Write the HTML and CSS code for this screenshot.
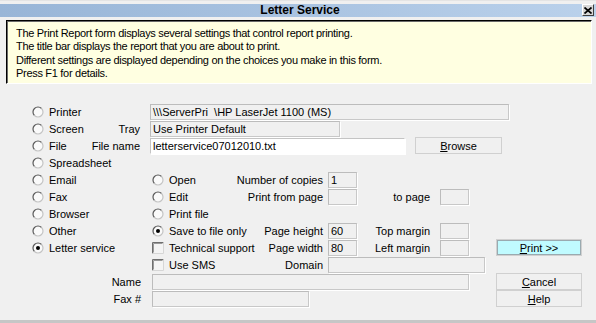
FILE: index.html
```html
<!DOCTYPE html>
<html lang="en">
<head>
    <meta charset="UTF-8">
    <title>Letter Service</title>
    <link rel="stylesheet" href="styles.css">
</head>
<body>
    <svg class="defs" width="0" height="0">
        <symbol id="rb" viewBox="0 0 12 12">
            <circle cx="6" cy="6" r="5" fill="#fafafa"/>
            <path d="M2.46 9.54 A5 5 0 0 1 9.54 2.46" fill="none" stroke="#5a5a5a" stroke-width="1.2"/>
            <path d="M9.54 2.46 A5 5 0 0 1 2.46 9.54" fill="none" stroke="#c4c4c4" stroke-width="1.2"/>
        </symbol>
        <symbol id="rbon" viewBox="0 0 12 12">
            <circle cx="6" cy="6" r="5" fill="#fafafa"/>
            <path d="M2.46 9.54 A5 5 0 0 1 9.54 2.46" fill="none" stroke="#5a5a5a" stroke-width="1.2"/>
            <path d="M9.54 2.46 A5 5 0 0 1 2.46 9.54" fill="none" stroke="#c4c4c4" stroke-width="1.2"/>
            <circle cx="6" cy="6" r="2" fill="#000"/>
        </symbol>
        <symbol id="cb" viewBox="0 0 12 12">
            <rect x="0" y="0" width="12" height="12" fill="#f4f4f4"/>
            <path d="M0.5 11.5 V0.5 H11.5" fill="none" stroke="#6e6e6e"/>
            <path d="M1.5 10.5 V1.5 H10.5" fill="none" stroke="#9a9a9a"/>
            <path d="M0.5 11.5 H11.5 V0.5" fill="none" stroke="#d6d6d6"/>
        </symbol>
    </svg>

    <div class="dialog">
        <div class="titlebar">
            <span class="title">Letter Service</span>
            <span class="close">
                <svg width="8" height="7" viewBox="0 0 8 7"><path d="M0.5 0.5 L7.5 6.5 M7.5 0.5 L0.5 6.5" stroke="#000" stroke-width="1.7"/></svg>
            </span>
        </div>

        <div class="info">
            The Print Report form displays several settings that control report printing.<br>
            The title bar displays the report that you are about to print.<br>
            Different settings are displayed depending on the choices you make in this form.<br>
            Press F1 for details.
        </div>

        <div class="form">
            <!-- destination row 1 -->
            <div class="c1 pair"><span class="opt"><svg class="ico"><use href="#rb"/></svg>Printer</span></div>
            <div class="c2-end"><div class="field w-printer">\\\ServerPri&nbsp;&nbsp;\HP LaserJet 1100 (MS)</div></div>

            <div class="c1 pair"><span class="opt"><svg class="ico"><use href="#rb"/></svg>Screen</span><span>Tray</span></div>
            <div class="c2-end"><div class="field w-tray">Use Printer Default</div></div>

            <div class="c1 pair"><span class="opt"><svg class="ico"><use href="#rb"/></svg>File</span><span>File name</span></div>
            <div class="c2-end file-row">
                <div class="field white w-file">letterservice07012010.txt</div>
                <div class="btn w-browse"><u>B</u>rowse</div>
            </div>

            <div class="c1 pair"><span class="opt"><svg class="ico"><use href="#rb"/></svg>Spreadsheet</span></div>

            <div class="c1 pair"><span class="opt"><svg class="ico"><use href="#rb"/></svg>Email</span></div>
            <div class="c2 pair pr5"><span class="opt sub"><svg class="ico"><use href="#rb"/></svg>Open</span><span>Number of copies</span></div>
            <div class="c3"><div class="field w-small">1</div></div>

            <div class="c1 pair"><span class="opt"><svg class="ico"><use href="#rb"/></svg>Fax</span></div>
            <div class="c2 pair pr5"><span class="opt sub"><svg class="ico"><use href="#rb"/></svg>Edit</span><span>Print from page</span></div>
            <div class="c3"><div class="field w-small"></div></div>
            <div class="c4 lbl">to page</div>
            <div class="c5"><div class="field w-small"></div></div>

            <div class="c1 pair"><span class="opt"><svg class="ico"><use href="#rb"/></svg>Browser</span></div>
            <div class="c2 pair pr5"><span class="opt sub"><svg class="ico"><use href="#rb"/></svg>Print file</span></div>

            <div class="c1 pair"><span class="opt"><svg class="ico"><use href="#rb"/></svg>Other</span></div>
            <div class="c2 pair pr5"><span class="opt sub"><svg class="ico"><use href="#rbon"/></svg>Save to file only</span><span>Page height</span></div>
            <div class="c3"><div class="field w-small">60</div></div>
            <div class="c4 lbl">Top margin</div>
            <div class="c5"><div class="field w-small"></div></div>

            <div class="c1 pair"><span class="opt"><svg class="ico"><use href="#rbon"/></svg>Letter service</span></div>
            <div class="c2 pair pr5"><span class="opt sub"><svg class="ico"><use href="#cb"/></svg>Technical support</span><span>Page width</span></div>
            <div class="c3"><div class="field w-small">80</div></div>
            <div class="c4 lbl">Left margin</div>
            <div class="c5"><div class="field w-small"></div></div>
            <div class="c7"><div class="btn w-btn print"><u>P</u>rint &gt;&gt;</div></div>

            <div class="c2 pair pr5"><span class="opt sub"><svg class="ico"><use href="#cb"/></svg>Use SMS</span><span>Domain</span></div>
            <div class="c3-end"><div class="field w-domain"></div></div>

            <div class="c1 lbl name-lbl">Name</div>
            <div class="c2-5"><div class="field w-name"></div></div>
            <div class="c7"><div class="btn w-btn"><u>C</u>ancel</div></div>

            <div class="c1 lbl name-lbl">Fax #</div>
            <div class="c2-5"><div class="field w-fax"></div></div>
            <div class="c7"><div class="btn w-btn"><u>H</u>elp</div></div>
        </div>
    </div>
</body>
</html>
```

FILE: styles.css
```css
body {
    margin: 0;
    font-family: "Liberation Sans", Arial, sans-serif;
    font-size: 11px;
    color: #000;
    background-color: #f0f0f0;
}
.defs {
    position: absolute;
    width: 0;
    height: 0;
}
.dialog {
    width: 596px;
    height: 323px;
    box-sizing: border-box;
    padding-top: 4px;
    background-color: #f0f0f0;
    border-top: 1px solid #e4e4e4;
    border-bottom: 3px solid #c6c6c6;
    overflow: hidden;
}
.titlebar {
    height: 13px;
    margin-top: -1px;
    display: flex;
    align-items: center;
    justify-content: center;
    position: relative;
    background: linear-gradient(to right, #98b5d7, #bad1eb);
}
.title {
    font-weight: bold;
    font-size: 12px;
    line-height: 13px;
    padding-left: 4px;
}
.close {
    position: absolute;
    right: 2px;
    top: 0;
    width: 10px;
    height: 10px;
    display: flex;
    align-items: center;
    justify-content: center;
    background-color: #d8d8d8;
    border: 1px solid;
    border-color: #fff #404040 #404040 #fff;
}
.info {
    margin: 3px 4px 0 6px;
    height: 64px;
    box-sizing: border-box;
    padding: 6px 0 0 9px;
    line-height: 13.3px;
    letter-spacing: -0.3px;
    background-color: #ffffe1;
    border: 1px solid;
    border-color: #000 #fff #fff #000;
    box-shadow: inset 1px 1px 0 #6a6a6a;
}
.form {
    display: grid;
    grid-template-columns: 118px 178px 29px 83px 29px 27px 86px;
    grid-auto-rows: 17px;
    margin: 19px 0 0 32px;
}
.form > div {
    display: flex;
    align-items: center;
    white-space: nowrap;
}
.c1 { grid-column: 1; }
.c2 { grid-column: 2; }
.c3 { grid-column: 3; }
.c4 { grid-column: 4; }
.c5 { grid-column: 5; }
.c7 { grid-column: 7; }
.c2-end { grid-column: 2 / -1; }
.c3-end { grid-column: 3 / -1; }
.c2-5 { grid-column: 2 / 6; }
.pair {
    justify-content: space-between;
    padding-right: 10px;
}
.pr5 { padding-right: 5px; }
.lbl {
    justify-content: flex-end;
    padding-right: 10px;
}
.name-lbl { padding-right: 9px; }
.opt {
    display: flex;
    align-items: center;
    gap: 5px;
}
.opt.sub { margin-left: 2px; }
.ico {
    width: 12px;
    height: 12px;
}
.field {
    height: 16px;
    box-sizing: border-box;
    padding: 0 0 0 2px;
    line-height: 14px;
    border: 1px solid;
    border-color: #bcbcbc #c8c8c8 #c8c8c8 #bcbcbc;
    box-shadow: 1px 1px 0 #fff;
    overflow: hidden;
}
.field.white {
    background-color: #fff;
    border-color: #c4c4c4 #fff #fff #c4c4c4;
}
.w-printer { width: 359px; }
.w-tray { width: 190px; }
.w-file { width: 255px; }
.w-small { width: 29px; }
.w-domain { width: 157px; }
.w-name { width: 317px; margin-left: 2px; }
.w-fax { width: 157px; margin-left: 2px; }
.file-row {
    gap: 10px;
}
.btn {
    height: 17px;
    box-sizing: border-box;
    display: flex;
    align-items: center;
    justify-content: center;
    border: 1px solid;
    border-color: #fff #b4b4b4 #b4b4b4 #fff;
    outline: 1px solid #d0d0d0;
    outline-offset: -1px;
    background-color: #f0f0f0;
}
.w-browse { width: 87px; }
.w-btn { width: 86px; }
.btn.print {
    background-color: #c0fbff;
    border-color: #d0d0d0;
    box-shadow: inset 0 0 0 1px #9aaab0;
    outline: none;
}
```
